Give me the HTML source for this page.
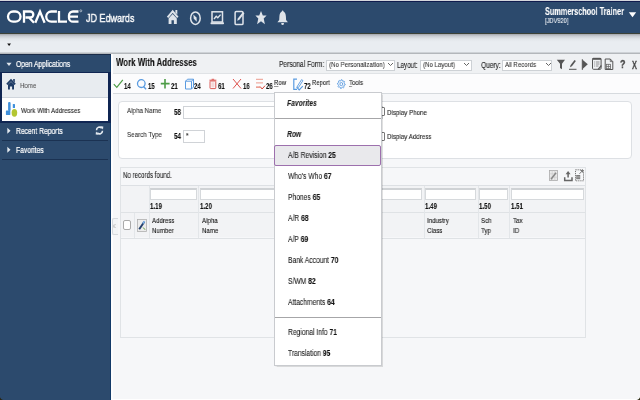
<!DOCTYPE html>
<html><head><meta charset="utf-8">
<style>
*{box-sizing:border-box}
html,body{margin:0;padding:0}
body{width:640px;height:400px;overflow:hidden;position:relative;background:#f6f7f9;font-family:"Liberation Sans",sans-serif;color:#333}
.a{position:absolute}
.t{position:absolute;white-space:nowrap;transform-origin:0 0;transform:scaleX(.79);line-height:1;will-change:transform;-webkit-text-stroke:.1px currentColor}
svg{position:absolute;overflow:visible}
b{font-weight:bold;color:#111}
</style></head><body>

<!-- HEADER -->
<div class="a" style="left:0;top:0;width:640px;height:1px;background:#d4d6dc"></div>
<div class="a" style="left:0;top:1px;width:640px;height:1px;background:#101c4e"></div>
<div class="a" style="left:0;top:2px;width:640px;height:31px;background:#2c4a6d"></div>

<!-- ORACLE logo -->
<svg style="left:0;top:0" width="90" height="33" viewBox="0 0 90 33">
 <g fill="none" stroke="#fff" stroke-width="2.3">
  <rect x="8" y="11.5" width="12.5" height="10.2" rx="5.1"/>
  <path d="M24 22.7V11.5h6.3a3 3 0 0 1 0 6H25.5M29 17.5l5 5.2"/>
  <path d="M35.3 22.7l4.7-11.2 4.6 11.2"/>
  <path d="M56.9 11.5h-5.6a5.1 5.1 0 0 0 0 10.2h5.6"/>
  <path d="M59 11V21.7h8"/>
  <path d="M78.5 11.5h-5.5a4 4 0 0 0-4 4v2.2a4 4 0 0 0 4 4h5.5M69.5 16.6h8.5"/>
 </g>
 <circle cx="80.8" cy="10.8" r="1" fill="none" stroke="#fff" stroke-width=".5"/>
</svg>
<div class="t" style="left:85.5px;top:12.85px;font-size:11.4px;color:#fff;-webkit-text-stroke:.4px #fff">JD Edwards</div>

<!-- header icons -->
<svg style="left:166px;top:9px" width="14" height="16" viewBox="0 0 14 16">
 <path d="M1.6 8.3L6.7 2.4l5.1 5.9" fill="none" stroke="#dfe4ea" stroke-width="2"/>
 <path d="M9.4 1h1.9v4.8L9.4 3.6z" fill="#dfe4ea"/>
 <path d="M2.6 9.6L6.7 5l4.1 4.6V15H7.9v-3.8H5.5V15H2.6z" fill="#dfe4ea"/>
</svg>
<svg style="left:189px;top:11px" width="13" height="15" viewBox="0 0 13 15">
 <ellipse cx="6.4" cy="7.2" rx="4.8" ry="6.2" fill="none" stroke="#dfe4ea" stroke-width="1.5"/>
 <path d="M4.3 3.4l3.2 3.1.3 4.3-3-3z" fill="#dfe4ea"/>
</svg>
<svg style="left:210px;top:11px" width="15" height="14" viewBox="0 0 15 14">
 <rect x="2" y="0.8" width="10.5" height="10.2" fill="none" stroke="#dfe4ea" stroke-width="1.5"/>
 <rect x="0.5" y="11.3" width="13.5" height="2" rx=".8" fill="#dfe4ea"/>
 <path d="M4 8l2.2-2.8 1.6 1.6 2.8-3.2" fill="none" stroke="#dfe4ea" stroke-width="1.4"/>
</svg>
<svg style="left:234px;top:10px" width="11" height="16" viewBox="0 0 11 16">
 <rect x="1.1" y="1.6" width="7.9" height="13" rx="1.2" fill="none" stroke="#dfe4ea" stroke-width="1.5"/>
 <path d="M3.2 10.8l0.6-2.3 5.1-6.6 1.6 1.3-5.1 6.6z" fill="#dfe4ea"/>
</svg>
<svg style="left:255px;top:10px" width="12" height="15" viewBox="0 0 12 15">
 <path d="M6 .9l1.8 4.5h3.8L8.7 8.4l1.2 5.9L6 11.3 2.1 14.3l1.2-5.9L.4 5.4h3.8z" fill="#dfe4ea"/>
</svg>
<svg style="left:277px;top:10px" width="12" height="16" viewBox="0 0 12 16">
 <path d="M5.6 .5c-.5 0-.8.4-.8.9C3.4 2 2.5 3.6 2.4 6.5L2.2 10 .4 12.3h10.5L9.1 10 8.9 6.5C8.8 3.6 7.9 2 6.5 1.4c0-.5-.4-.9-.9-.9z" fill="#dfe4ea"/>
 <path d="M4.3 13h2.6v.8a1.3 1.3 0 0 1-2.6 0z" fill="#dfe4ea"/>
</svg>

<div class="t" style="left:544.7px;top:6.8px;font-size:10.2px;font-weight:bold;color:#fff;transform:scaleX(.715)">Summerschool Trainer</div>
<div class="t" style="left:544.7px;top:16.8px;font-size:7.8px;color:#eef1f5;transform:scaleX(.73)">[JDV920]</div>
<svg style="left:628px;top:12px" width="9" height="6" viewBox="0 0 9 6"><path d="M.8 .3h7.4L4.5 5.2z" fill="#fff"/></svg>

<!-- GRAY BAR -->
<div class="a" style="left:0;top:33px;width:640px;height:21px;background:linear-gradient(#3b4238 0,#3b4238 1px,#a2a5aa 1px,#c8ccd2 3px,#e2e6ea 6px,#e9edf1 9px,#e9edf1 19px,#b3b7bb 20px,#b3b7bb 21px)"></div>
<svg style="left:6px;top:42px" width="6" height="5" viewBox="0 0 6 5"><path d="M1.2 1.5h3.8L3.1 4z" fill="#111"/></svg>

<!-- SIDEBAR -->
<div class="a" style="left:0;top:54px;width:111px;height:346px;background:#2c4a6d"></div>
<div class="a" style="left:110px;top:54px;width:1.5px;height:346px;background:#123a68"></div>
<div class="a" style="left:0;top:54px;width:111px;height:1px;background:#1a2c48"></div>
<svg style="left:5px;top:61px" width="8" height="6" viewBox="0 0 8 6"><path d="M1.4 1.8h5.2L4 5z" fill="#dfe5ec"/></svg>
<div class="t" style="left:16px;top:60.3px;font-size:8.5px;color:#fff;-webkit-text-stroke:.22px #fff">Open Applications</div>

<div class="a" style="left:0;top:72px;width:111px;height:51px;background:#0f2552"></div>
<div class="a" style="left:2px;top:73px;width:106px;height:24px;background:#e8ecf0"></div>
<div class="a" style="left:2px;top:97px;width:106px;height:1px;background:#cfd5dc"></div>
<div class="a" style="left:2px;top:98px;width:106px;height:22.5px;background:#fff"></div>

<svg style="left:6px;top:78px" width="11" height="12" viewBox="0 0 11 12">
 <path d="M.9 6.3L5 2.2l4.1 4.1" fill="none" stroke="#1f3c66" stroke-width="1.9"/>
 <path d="M7.2 1h1.6v3.6L7.2 3z" fill="#1f3c66"/>
 <path d="M2 6.6L5 3.8l3 2.8v4.9H6.1V8.4H3.9v3.1H2z" fill="#1f3c66"/>
</svg>
<div class="t" style="left:20px;top:81.8px;font-size:8px;color:#555;transform:scaleX(.76)">Home</div>

<svg style="left:5px;top:101px" width="14" height="17" viewBox="0 0 14 17">
 <rect x="3.1" y="1" width="2.5" height="9" rx="1.1" fill="#3f90dc"/>
 <rect x=".9" y="9.5" width="4.4" height="4.4" rx=".4" fill="#3f90dc"/>
 <rect x="7.8" y="3" width="2.2" height="4" rx=".5" fill="#3f90dc"/>
 <ellipse cx="9.4" cy="11.8" rx="2.8" ry="3.9" fill="#b3c633"/>
</svg>
<div class="t" style="left:20.6px;top:106.6px;font-size:7.9px;color:#1a1a1a">Work With Addresses</div>

<svg style="left:6px;top:126px" width="6" height="9" viewBox="0 0 6 9"><path d="M1.3 1.8v6l3.2-3z" fill="#e4eaf0"/></svg>
<div class="t" style="left:16px;top:126.8px;font-size:8.5px;color:#fff;-webkit-text-stroke:.22px #fff">Recent Reports</div>
<svg style="left:95px;top:125px" width="9" height="11" viewBox="0 0 9 11">
 <path d="M1.5 5.2a3 3 0 0 1 5.3-2" fill="none" stroke="#e4eaf0" stroke-width="1.6"/>
 <path d="M5.3 1.2l3 .2-.3 3z" fill="#e4eaf0"/>
 <path d="M7.5 5.8a3 3 0 0 1-5.3 2" fill="none" stroke="#e4eaf0" stroke-width="1.6"/>
 <path d="M3.7 9.8l-3-.2.3-3z" fill="#e4eaf0"/>
</svg>
<div class="a" style="left:2px;top:140px;width:106px;height:1px;background:#1b3252"></div>
<svg style="left:6px;top:145px" width="6" height="9" viewBox="0 0 6 9"><path d="M1.3 1.8v6l3.2-3z" fill="#e4eaf0"/></svg>
<div class="t" style="left:16px;top:145.8px;font-size:8.5px;color:#fff;-webkit-text-stroke:.22px #fff">Favorites</div>
<div class="a" style="left:2px;top:159px;width:106px;height:1px;background:#1b3252"></div>

<!-- MAIN -->
<div class="a" style="left:111px;top:54px;width:529px;height:19px;background:#eff1f3"></div>
<div class="a" style="left:111px;top:73px;width:529px;height:1px;background:#e0e3e6"></div>
<div class="a" style="left:111px;top:74px;width:529px;height:19px;background:#fcfcfd"></div>
<div class="a" style="left:111px;top:93px;width:529px;height:1px;background:#d6dade"></div>

<div class="t" style="left:115.6px;top:57.9px;font-size:10.4px;font-weight:bold;color:#111;transform:scaleX(.757)">Work With Addresses</div>

<div class="t" style="left:278.7px;top:60.4px;font-size:8.8px;color:#222;transform:scaleX(.754)">Personal Form:</div>
<div class="a" style="left:326px;top:59.5px;width:69px;height:11.5px;background:#fff;border:1px solid #cdd1d5"></div>
<div class="t" style="left:329.4px;top:61.4px;font-size:8px;color:#333;transform:scaleX(.77)">(No Personalization)</div>
<svg style="left:387px;top:62px" width="7" height="5" viewBox="0 0 7 5"><path d="M1 1l2.5 2.5L6 1" fill="none" stroke="#555" stroke-width=".9"/></svg>

<div class="t" style="left:396.9px;top:60.9px;font-size:8.8px;color:#222;transform:scaleX(.713)">Layout:</div>
<div class="a" style="left:420px;top:59.5px;width:51.5px;height:11.5px;background:#fff;border:1px solid #cdd1d5"></div>
<div class="t" style="left:423px;top:61.4px;font-size:8px;color:#333;transform:scaleX(.765)">(No Layout)</div>
<svg style="left:463px;top:62px" width="7" height="5" viewBox="0 0 7 5"><path d="M1 1l2.5 2.5L6 1" fill="none" stroke="#555" stroke-width=".9"/></svg>

<div class="t" style="left:480.5px;top:60.8px;font-size:9px;color:#222;transform:scaleX(.728)">Query:</div>
<div class="a" style="left:502.3px;top:59.5px;width:50px;height:11.5px;background:#fff;border:1px solid #cdd1d5"></div>
<div class="t" style="left:505px;top:61.4px;font-size:8px;color:#333;transform:scaleX(.76)">All Records</div>
<svg style="left:545px;top:62px" width="7" height="5" viewBox="0 0 7 5"><path d="M1 1l2.5 2.5L6 1" fill="none" stroke="#555" stroke-width=".9"/></svg>

<!-- right title icons -->
<svg style="left:556px;top:59px" width="10" height="11" viewBox="0 0 10 11">
 <path d="M.8 .8h8.2L6 4.8v5.5L4 9V4.8z" fill="#555"/>
</svg>
<svg style="left:568px;top:59px" width="10" height="12" viewBox="0 0 10 12">
 <path d="M2 8.2l.5-2 4-5.3 1.4 1.1-4 5.3z" fill="#555"/>
 <rect x="1" y="9.8" width="7.5" height="1" fill="#555"/>
</svg>
<svg style="left:580px;top:59px" width="10" height="12" viewBox="0 0 10 12">
 <rect x="1.8" y=".3" width="1.1" height="10.5" fill="#555"/>
 <path d="M2.8 .9l5 4.4-5 4.5z" fill="#555"/>
</svg>
<svg style="left:591px;top:57px" width="12" height="14" viewBox="0 0 12 14">
 <rect x="1.5" y="1.3" width="8.6" height="11" rx="1" fill="none" stroke="#555" stroke-width="1"/>
 <rect x="1.5" y="1" width="8.6" height="1.8" fill="#555"/>
 <path d="M3.2 5h1M5 5h3.5M3.2 7h1M5 7h3.5M3.2 9h1M5 9h2.5" stroke="#777" stroke-width=".8"/>
 <path d="M7.2 12.3l3.2-3.8" stroke="#555" stroke-width="1.3"/>
</svg>
<svg style="left:604px;top:58px" width="11" height="13" viewBox="0 0 11 13">
 <path d="M1.2 1H6.3L8.8 3.6V11.5H1.2Z" fill="none" stroke="#555" stroke-width="1"/>
 <path d="M6.3 1V3.6H8.8" fill="none" stroke="#555" stroke-width=".8"/>
 <rect x="2.3" y="6.3" width="4.2" height="4.4" fill="none" stroke="#666" stroke-width=".8"/>
 <path d="M4.4 6.3v4.4M2.3 8.5h4.2" stroke="#666" stroke-width=".7"/>
</svg>
<div class="t" style="left:619.5px;top:59.2px;font-size:11px;font-weight:bold;color:#444;-webkit-text-stroke:.3px #444;transform:scaleX(.8)">?</div>
<div class="t" style="left:632.2px;top:59.7px;font-size:10.5px;font-weight:bold;color:#444;-webkit-text-stroke:.3px #444;transform:scaleX(.7)">X</div>

<!-- toolbar -->
<svg style="left:113px;top:79px" width="11" height="10" viewBox="0 0 11 10">
 <path d="M.8 5.2l3 3.2L9.8.8" fill="none" stroke="#4d9c47" stroke-width="1.2"/>
</svg>
<div class="t" style="left:123.7px;top:82.1px;font-size:8.7px;font-weight:bold;color:#111;transform:scaleX(.7)">14</div>
<svg style="left:136px;top:79px" width="12" height="11" viewBox="0 0 12 11">
 <ellipse cx="5.3" cy="4.6" rx="3.8" ry="3.9" fill="none" stroke="#5a9be0" stroke-width="1.3"/>
 <path d="M7.5 7.6l2.6 2.6" stroke="#5a9be0" stroke-width="1.4"/>
</svg>
<div class="t" style="left:147.5px;top:82.1px;font-size:8.7px;font-weight:bold;color:#111;transform:scaleX(.7)">15</div>
<svg style="left:160px;top:78px" width="11" height="11" viewBox="0 0 11 11">
 <path d="M5 1v9.5M.8 5.6h8.8" stroke="#4d9c47" stroke-width="1.6"/>
</svg>
<div class="t" style="left:170.6px;top:82.1px;font-size:8.7px;font-weight:bold;color:#111;transform:scaleX(.7)">21</div>
<svg style="left:184px;top:78px" width="11" height="12" viewBox="0 0 11 12">
 <path d="M1.5 3.2h6v7.8h-6z M1.5 3.2l2-2h6v7.8l-2 2 M7.5 3.2l2-2" fill="none" stroke="#5a9be0" stroke-width="1"/>
</svg>
<div class="t" style="left:194.4px;top:82.1px;font-size:8.7px;font-weight:bold;color:#111;transform:scaleX(.7)">24</div>
<svg style="left:208px;top:78px" width="10" height="12" viewBox="0 0 10 12">
 <rect x="2" y="3" width="5.8" height="7.6" rx=".6" fill="none" stroke="#dc5c58" stroke-width="1"/>
 <path d="M1.4 2.2h7M3.6 1.3h2.6" stroke="#dc5c58" stroke-width="1"/>
 <path d="M3.9 4.3v5M4.9 4.3v5M5.9 4.3v5" stroke="#eeaaa8" stroke-width=".5"/>
</svg>
<div class="t" style="left:218px;top:82.1px;font-size:8.7px;font-weight:bold;color:#111;transform:scaleX(.7)">61</div>
<svg style="left:232px;top:78px" width="10" height="11" viewBox="0 0 10 11">
 <path d="M1 1l8 9.5M9 1L1 10.5" stroke="#dc4a45" stroke-width=".95"/>
</svg>
<div class="t" style="left:242.5px;top:82.1px;font-size:8.7px;font-weight:bold;color:#111;transform:scaleX(.7)">16</div>
<svg style="left:255px;top:78px" width="11" height="13" viewBox="0 0 11 13">
 <path d="M1 1.3h7M1 4.9h7" stroke="#eb9a8c" stroke-width="1"/>
 <path d="M1 9.1h4.2" stroke="#e0604e" stroke-width="1"/>
 <path d="M5.2 8.6l1.9 2.4 3-3.4" fill="none" stroke="#d9463a" stroke-width="1"/>
</svg>
<div class="t" style="left:266px;top:81.8px;font-size:8.7px;font-weight:bold;color:#111;transform:scaleX(.7)">26</div>
<div class="t" style="left:274.4px;top:79.2px;font-size:7.7px;color:#222"><u style="text-decoration-color:#999">R</u>ow</div>
<svg style="left:292px;top:78px" width="12" height="13" viewBox="0 0 12 13">
 <path d="M5 1.2H1.8V11.4H5" fill="none" stroke="#5a9be0" stroke-width="1.2"/>
 <path d="M5 8.8L9.6 1.6l1.3 1L6.4 9.6z" fill="none" stroke="#5a9be0" stroke-width=".9"/>
 <path d="M4.6 9.2l2.6 2.6 3.6-3.6" fill="none" stroke="#5a9be0" stroke-width="1.2"/>
</svg>
<div class="t" style="left:303.5px;top:81.8px;font-size:8.7px;font-weight:bold;color:#111;transform:scaleX(.7)">72</div>
<div class="t" style="left:312px;top:79.4px;font-size:7.5px;color:#222">Report</div>
<svg style="left:336px;top:79px" width="11" height="11" viewBox="0 0 11 11">
 <path d="M9.17 5.10 L9.10 5.96 L7.98 6.36 L7.71 6.93 L8.04 8.21 L7.45 8.76 L6.41 8.15 L5.87 8.34 L5.30 9.50 L4.54 9.42 L4.19 8.15 L3.69 7.84 L2.56 8.21 L2.08 7.54 L2.62 6.36 L2.45 5.74 L1.43 5.10 L1.50 4.24 L2.62 3.84 L2.89 3.27 L2.56 1.99 L3.15 1.44 L4.19 2.05 L4.73 1.86 L5.30 0.70 L6.06 0.78 L6.41 2.05 L6.91 2.36 L8.04 1.99 L8.52 2.66 L7.98 3.84 L8.15 4.46Z" fill="none" stroke="#5a9be0" stroke-width=".9" stroke-linejoin="round"/>
 <ellipse cx="5.3" cy="5.1" rx="1.4" ry="1.6" fill="none" stroke="#5a9be0" stroke-width=".9"/>
</svg>
<div class="t" style="left:348.8px;top:79.2px;font-size:7.65px;color:#222"><u style="text-decoration-color:#999">T</u>ools</div>

<!-- SEARCH PANEL -->
<div class="a" style="left:117.5px;top:101px;width:514px;height:57.5px;background:#fff;border:1px solid #dde0e4;border-radius:4px"></div>
<div class="t" style="left:127px;top:106.6px;font-size:7.9px;color:#333">Alpha Name</div>
<div class="t" style="left:173.9px;top:107.7px;font-size:8.7px;font-weight:bold;color:#111;transform:scaleX(.72)">58</div>
<div class="a" style="left:182.5px;top:106px;width:200px;height:12.8px;background:#fff;border:1px solid #d0d3d7"></div>
<div class="t" style="left:127px;top:130.8px;font-size:7.9px;color:#333">Search Type</div>
<div class="t" style="left:174px;top:131.7px;font-size:8.7px;font-weight:bold;color:#111;transform:scaleX(.72)">54</div>
<div class="a" style="left:182.5px;top:129.7px;width:22.7px;height:13.3px;background:#fff;border:1px solid #d0d3d7"></div>
<div class="t" style="left:185.5px;top:131.5px;font-size:8px;color:#222">*</div>
<div class="a" style="left:379px;top:107.3px;width:6px;height:9px;background:#fff;border:1px solid #777;border-radius:1px"></div>
<div class="t" style="left:386.8px;top:108.6px;font-size:7.85px;color:#222">Display Phone</div>
<div class="a" style="left:379px;top:131.5px;width:6px;height:9px;background:#fff;border:1px solid #777;border-radius:1px"></div>
<div class="t" style="left:386.8px;top:132.8px;font-size:7.85px;color:#222">Display Address</div>

<!-- GRID PANEL -->
<div class="a" style="left:111px;top:54px;width:2px;height:346px;background:#fdfdfe"></div>
<div class="a" style="left:119.5px;top:166.5px;width:466px;height:171.5px;background:#f6f7f9;border:1px solid #e0e3e6"></div>
<div class="t" style="left:122.7px;top:172px;font-size:8.2px;color:#222;transform:scaleX(.75)">No records found.</div>

<svg style="left:548px;top:169px" width="11" height="13" viewBox="0 0 11 13">
 <rect x="1.5" y="1.5" width="8" height="10" fill="#eaeaea" stroke="#aaa" stroke-width=".8"/>
 <path d="M1.5 4.8h8M1.5 8.2h8M4.2 1.5v10M6.8 1.5v10" stroke="#c8c8c8" stroke-width=".6"/>
 <path d="M3 10.2l5-6.5" stroke="#888" stroke-width="1.5"/>
</svg>
<svg style="left:563px;top:169px" width="11" height="13" viewBox="0 0 11 13">
 <path d="M5.1 4.5v4" stroke="#666" stroke-width="1.5"/>
 <path d="M2.6 5.3L5.1 2l2.5 3.3z" fill="#666"/>
 <path d="M1.7 8.2v3.3h7.3V8.2" fill="none" stroke="#666" stroke-width="1.5"/>
</svg>
<svg style="left:574px;top:168px" width="11" height="14" viewBox="0 0 11 14">
 <rect x="1.5" y="1.8" width="8" height="11" fill="none" stroke="#777" stroke-width="1" stroke-dasharray="1.2 .9"/>
 <rect x="2.2" y="7" width="4" height="4.2" fill="#777"/>
 <path d="M2.2 8.4h4M2.2 9.8h4" stroke="#ccc" stroke-width=".5"/>
 <path d="M5.5 5.8l3-3.2M6.5 2.5h2v2" fill="none" stroke="#666" stroke-width=".9"/>
</svg>

<div class="a" style="left:120.5px;top:185.3px;width:464px;height:1px;background:#dde0e4"></div>
<div class="a" style="left:120.5px;top:186.3px;width:464px;height:51px;background:#f2f3f5"></div>
<div class="a" style="left:120.5px;top:212.2px;width:464px;height:1px;background:#dfe2e5"></div>
<div class="a" style="left:120.5px;top:237.5px;width:464px;height:1px;background:#dfe2e5"></div>
<div class="a" style="left:148.5px;top:186px;width:1px;height:52px;background:#e3e6e9"></div>
<div class="a" style="left:133.5px;top:212.5px;width:1px;height:25.5px;background:#e3e6e9"></div>
<div class="a" style="left:198.2px;top:186px;width:1px;height:52px;background:#e3e6e9"></div>
<div class="a" style="left:423.5px;top:186px;width:1px;height:52px;background:#e3e6e9"></div>
<div class="a" style="left:477.5px;top:186px;width:1px;height:52px;background:#e3e6e9"></div>
<div class="a" style="left:509.3px;top:186px;width:1px;height:52px;background:#e3e6e9"></div>

<div class="a" style="left:150.2px;top:187.5px;width:47.3px;height:12.8px;background:#fff;border:1px solid #d6d9dc;border-top:2px solid #cfd2d5"></div>
<div class="a" style="left:199.7px;top:187.5px;width:222.3px;height:12.8px;background:#fff;border:1px solid #d6d9dc;border-top:2px solid #cfd2d5"></div>
<div class="a" style="left:425.2px;top:187.5px;width:50.6px;height:12.8px;background:#fff;border:1px solid #d6d9dc;border-top:2px solid #cfd2d5"></div>
<div class="a" style="left:479.3px;top:187.5px;width:28.3px;height:12.8px;background:#fff;border:1px solid #d6d9dc;border-top:2px solid #cfd2d5"></div>
<div class="a" style="left:511px;top:187.5px;width:72.5px;height:12.8px;background:#fff;border:1px solid #d6d9dc;border-top:2px solid #cfd2d5"></div>

<div class="t" style="left:150px;top:201.5px;font-size:9px;font-weight:bold;color:#111;transform:scaleX(.68)">1.19</div>
<div class="t" style="left:199.7px;top:201.5px;font-size:9px;font-weight:bold;color:#111;transform:scaleX(.68)">1.20</div>
<div class="t" style="left:425.2px;top:201.5px;font-size:9px;font-weight:bold;color:#111;transform:scaleX(.68)">1.49</div>
<div class="t" style="left:479.3px;top:201.5px;font-size:9px;font-weight:bold;color:#111;transform:scaleX(.68)">1.50</div>
<div class="t" style="left:511px;top:201.5px;font-size:9px;font-weight:bold;color:#111;transform:scaleX(.68)">1.51</div>

<div class="a" style="left:123px;top:220.3px;width:7.6px;height:10.2px;background:#fff;border:1px solid #aaa;border-radius:2px"></div>
<svg style="left:137px;top:219px" width="10" height="13" viewBox="0 0 10 13">
 <rect x=".5" y=".5" width="9" height="12" fill="#ececec" stroke="#b0b0b0" stroke-width=".8"/>
 <path d="M2.2 10.3L7.3 2.8" stroke="#24406c" stroke-width="2"/>
 <path d="M5.8 4.6L7.6 2.2" stroke="#7ab0e8" stroke-width="1.6"/>
 <path d="M6.2 8.5l1.8 2.2" stroke="#5e9c3a" stroke-width="1"/>
</svg>
<div class="t" style="left:151.7px;top:216.9px;font-size:7.76px;color:#111">Address</div>
<div class="t" style="left:151.7px;top:226.6px;font-size:7.76px;color:#111">Number</div>
<div class="t" style="left:202px;top:216.9px;font-size:7.76px;color:#111">Alpha</div>
<div class="t" style="left:202px;top:226.6px;font-size:7.76px;color:#111">Name</div>
<div class="t" style="left:427px;top:216.9px;font-size:7.76px;color:#111">Industry</div>
<div class="t" style="left:427px;top:226.6px;font-size:7.76px;color:#111">Class</div>
<div class="t" style="left:480.6px;top:216.9px;font-size:7.76px;color:#111">Sch</div>
<div class="t" style="left:480.6px;top:226.6px;font-size:7.76px;color:#111">Typ</div>
<div class="t" style="left:512.7px;top:216.9px;font-size:7.76px;color:#111">Tax</div>
<div class="t" style="left:512.7px;top:226.6px;font-size:7.76px;color:#111">ID</div>

<div class="a" style="left:112.3px;top:218px;width:6px;height:16.7px;background:#f2f4f6;border:1px solid #d5d9dd;border-right:none;border-radius:2px 0 0 2px"></div>
<div class="t" style="left:113.4px;top:221.8px;font-size:9px;color:#aaa;transform:scaleX(.55)">&laquo;</div>

<!-- MENU -->
<div class="a" style="left:274px;top:91.8px;width:108px;height:274.2px;background:#fff;border:1px solid #c9cbcf;box-shadow:.5px .5px 1px rgba(0,0,0,.12)"></div>
<div class="t" style="left:287px;top:98.8px;font-size:8.5px;font-weight:bold;font-style:italic;color:#222">Favorites</div>
<div class="a" style="left:275px;top:117.5px;width:105.5px;height:1px;background:#a6a6a8"></div>
<div class="t" style="left:287px;top:130.3px;font-size:8.5px;font-weight:bold;font-style:italic;color:#222">Row</div>
<div class="a" style="left:274.4px;top:144.5px;width:107px;height:21.3px;background:#e9e9ec;border:1px solid #9d70ad;border-radius:2px"></div>
<div class="t" style="left:287.7px;top:150.9px;font-size:8.5px;color:#222">A/B Revision <b>25</b></div>
<div class="t" style="left:287.7px;top:172.2px;font-size:8.5px;color:#222">Who's Who <b>67</b></div>
<div class="t" style="left:287.7px;top:193.3px;font-size:8.5px;color:#222">Phones <b>65</b></div>
<div class="t" style="left:287.7px;top:213.8px;font-size:8.5px;color:#222">A/R <b>68</b></div>
<div class="t" style="left:287.7px;top:234.8px;font-size:8.5px;color:#222">A/P <b>69</b></div>
<div class="t" style="left:287.7px;top:256.3px;font-size:8.5px;color:#222">Bank Account <b>70</b></div>
<div class="t" style="left:287.7px;top:276.8px;font-size:8.5px;color:#222">S/WM <b>82</b></div>
<div class="t" style="left:287.7px;top:298.3px;font-size:8.5px;color:#222">Attachments <b>64</b></div>
<div class="a" style="left:275px;top:317px;width:105.5px;height:1px;background:#a6a6a8"></div>
<div class="t" style="left:287.7px;top:328.4px;font-size:8.5px;color:#222">Regional Info <b>71</b></div>
<div class="t" style="left:287.7px;top:349.4px;font-size:8.5px;color:#222">Translation <b>95</b></div>

<svg style="left:0;top:396px" width="4" height="4" viewBox="0 0 4 4"><path d="M0 1.2Q.6 3.4 3 4H0z" fill="#2a2410"/></svg>
<svg style="left:636px;top:396px" width="4" height="4" viewBox="0 0 4 4"><path d="M4 1.2Q3.4 3.4 1 4H4z" fill="#2a2a10"/></svg>
<div class="a" style="left:111px;top:399px;width:525px;height:1px;background:#fff"></div>
</body></html>
